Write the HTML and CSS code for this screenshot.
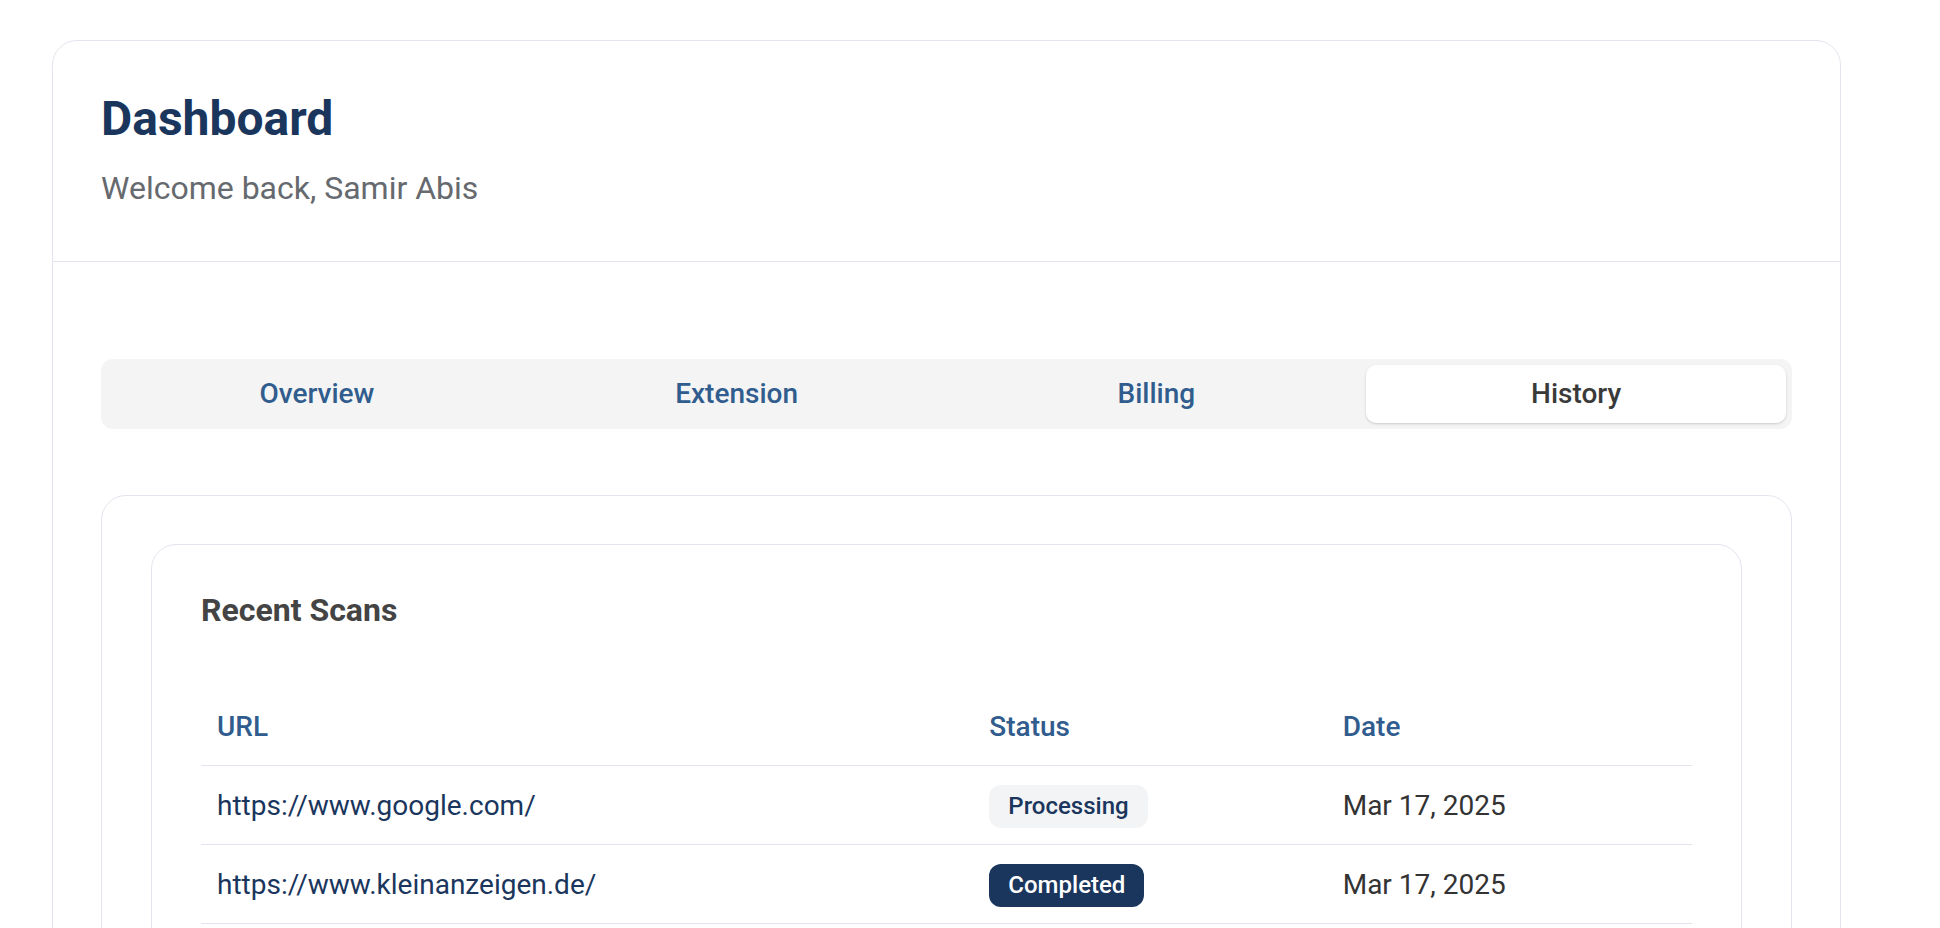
FILE: index.html
```html
<!DOCTYPE html>
<html lang="en">
<head>
    <meta charset="UTF-8">
    <meta name="viewport" content="width=device-width, initial-scale=1.0">
    <title>Dashboard</title>
    <link rel="stylesheet" href="styles.css">
</head>
<body>
    <div class="dashboard">
        <div class="dashboard-header">
            <h1>Dashboard</h1>
            <p class="welcome">Welcome back, Samir Abis</p>
        </div>

        <div class="dashboard-body">
            <div class="tabs">
                <button class="tab">Overview</button>
                <button class="tab">Extension</button>
                <button class="tab">Billing</button>
                <button class="tab active">History</button>
            </div>

            <div class="panel">
                <div class="card">
                    <h2>Recent Scans</h2>
                    <table class="scans">
                        <thead>
                            <tr>
                                <th class="col-url">URL</th>
                                <th class="col-status">Status</th>
                                <th class="col-date">Date</th>
                            </tr>
                        </thead>
                        <tbody>
                            <tr>
                                <td class="url">https://www.google.com/</td>
                                <td><span class="badge processing">Processing</span></td>
                                <td class="date">Mar 17, 2025</td>
                            </tr>
                            <tr>
                                <td class="url">https://www.kleinanzeigen.de/</td>
                                <td><span class="badge completed">Completed</span></td>
                                <td class="date">Mar 17, 2025</td>
                            </tr>
                        </tbody>
                    </table>
                </div>
            </div>
        </div>
    </div>
</body>
</html>
```

FILE: styles.css
```css
body {
    font-family: Roboto, 'Liberation Sans', Arial, sans-serif;
    background-color: #ffffff;
    margin: 40px 99px 0 52px;
    color: #333;
}

.dashboard {
    border: 1px solid #e2e5ee;
    border-radius: 25px;
    background-color: #fff;
}

.dashboard-header {
    padding: 50px 48px 54px;
    border-bottom: 1px solid #e2e5ee;
}

.dashboard-header h1 {
    margin: 0;
    font-size: 48px;
    font-weight: 700;
    color: #1b365d;
    line-height: 56px;
}

.welcome {
    margin: 23px 0 0;
    font-size: 32px;
    line-height: 37px;
    color: #66696e;
}

.dashboard-body {
    padding: 97px 48px 48px;
}

.tabs {
    display: grid;
    grid-template-columns: repeat(4, 1fr);
    padding: 6px;
    background-color: #f4f4f4;
    border-radius: 12px;
}

.tab {
    font-family: inherit;
    font-size: 28px;
    font-weight: 500;
    line-height: 42px;
    padding: 8px 0;
    border: none;
    background: none;
    color: #305c8e;
    border-radius: 10px;
    cursor: pointer;
}

.tab.active {
    background-color: #fff;
    color: #3a3a3a;
    box-shadow: 0 1px 3px rgba(0, 0, 0, 0.12), 0 1px 2px rgba(0, 0, 0, 0.06);
}

.panel {
    margin-top: 66px;
    padding: 48px 49px;
    border: 1px solid #e2e5ee;
    border-radius: 25px;
}

.card {
    padding: 47px 49px 49px;
    border: 1px solid #e2e5ee;
    border-radius: 25px;
}

.card h2 {
    margin: 0 0 59px;
    font-size: 32px;
    font-weight: 700;
    line-height: 37px;
    color: #444;
}

.scans {
    width: 100%;
    border-collapse: collapse;
}

.scans th {
    text-align: left;
    font-size: 28px;
    font-weight: 500;
    line-height: 45px;
    padding: 16px;
    color: #305c8e;
    border-bottom: 1px solid #e2e5ee;
}

.col-url {
    width: 51.8%;
}

.col-status {
    width: 23.7%;
}

.scans td {
    padding: 17px 16px 16px;
    font-size: 28px;
    line-height: 43px;
    border-bottom: 1px solid #e2e5ee;
}

.scans td.url {
    color: #1b365d;
}

.scans td.date {
    color: #333;
}

.badge {
    display: inline-block;
    vertical-align: middle;
    padding: 8px 19px;
    font-size: 24px;
    font-weight: 500;
    line-height: 27px;
    border-radius: 12px;
}

.badge.processing {
    background-color: #f3f4f6;
    color: #1b365d;
}

.badge.completed {
    background-color: #1b365d;
    color: #fff;
}
```
